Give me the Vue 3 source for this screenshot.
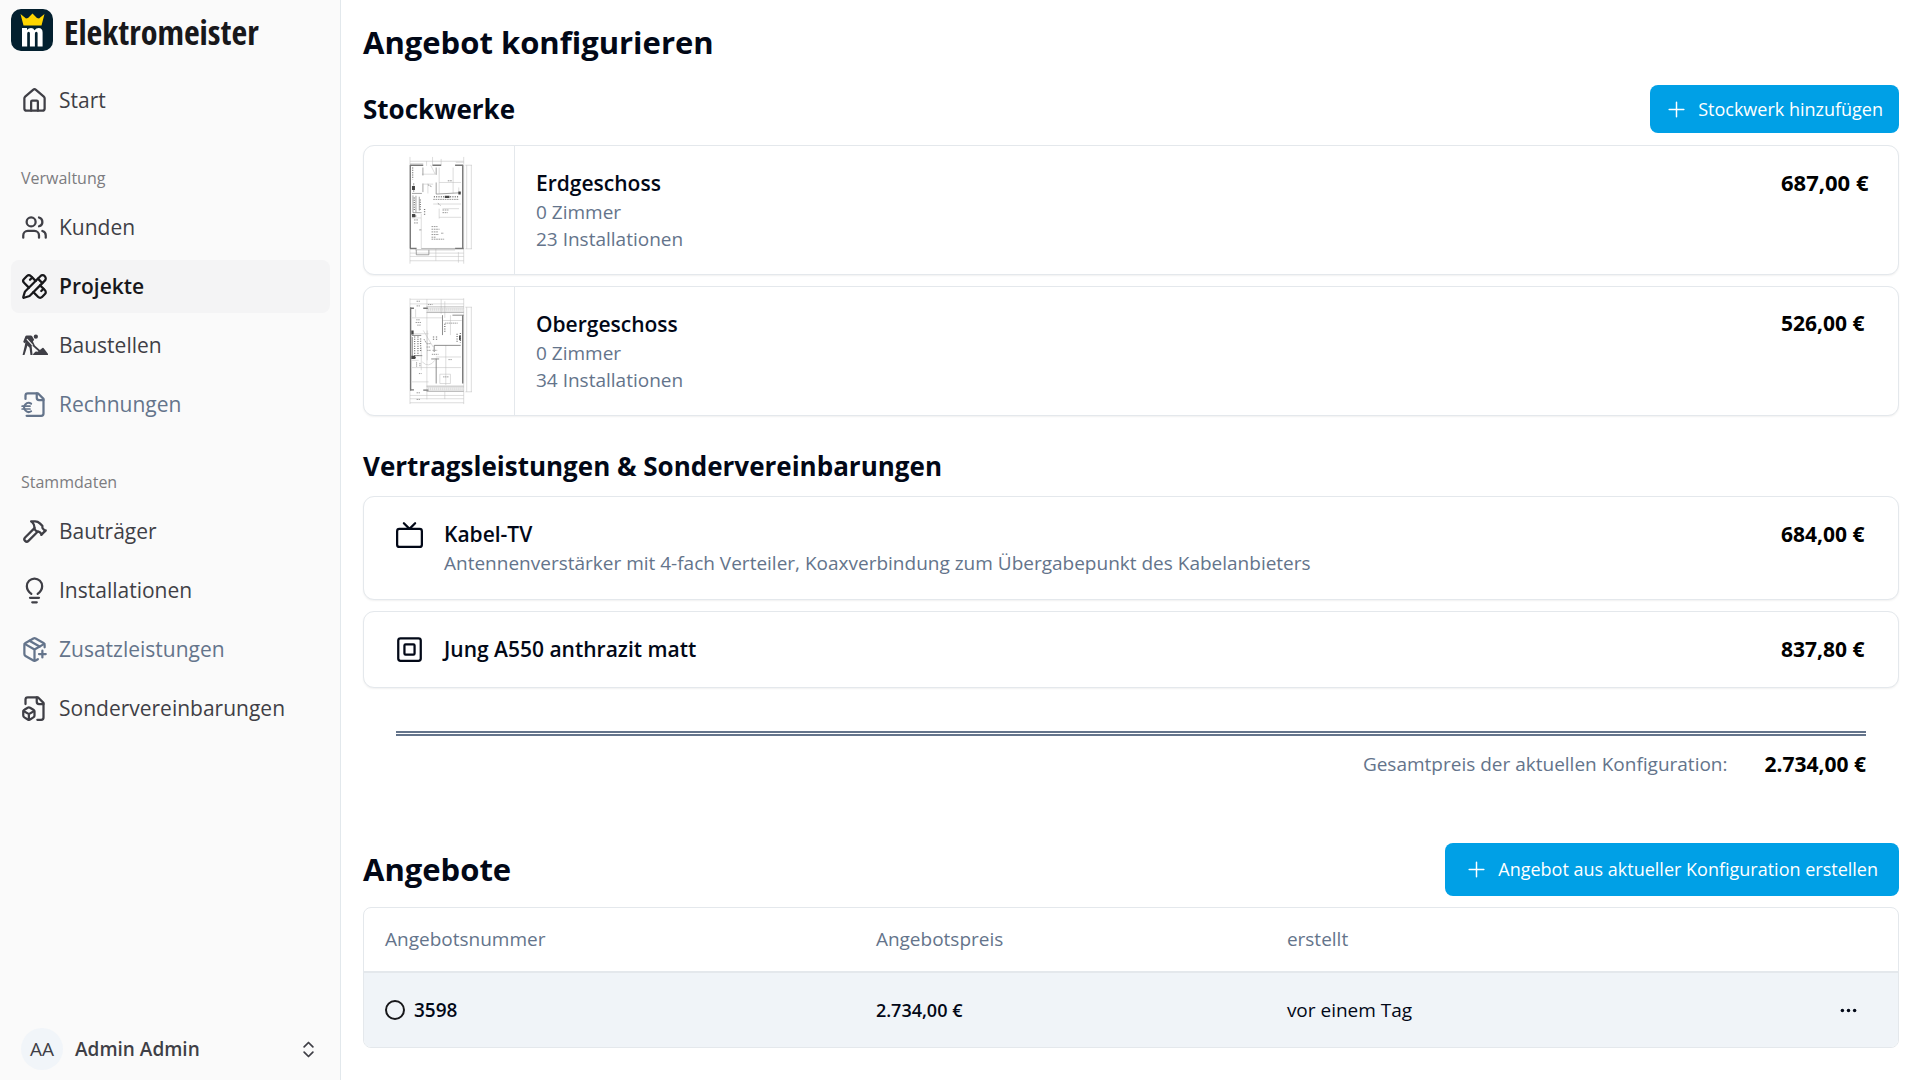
<script setup>
import { ref } from 'vue'

const icons = {
  home: '<path d="M15 21v-8a1 1 0 0 0-1-1h-4a1 1 0 0 0-1 1v8"/><path d="M3 10a2 2 0 0 1 .709-1.528l7-5.999a2 2 0 0 1 2.582 0l7 5.999A2 2 0 0 1 21 10v9a2 2 0 0 1-2 2H5a2 2 0 0 1-2-2z"/>',
  users: '<path d="M16 21v-2a4 4 0 0 0-4-4H6a4 4 0 0 0-4 4v2"/><circle cx="9" cy="7" r="4"/><path d="M22 21v-2a4 4 0 0 0-3-3.87"/><path d="M16 3.13a4 4 0 0 1 0 7.75"/>',
  tools: '<path d="M13 7 8.7 2.7a2.41 2.41 0 0 0-3.4 0L2.7 5.3a2.41 2.41 0 0 0 0 3.4L7 13"/><path d="m8 6 2-2"/><path d="m18 16 2-2"/><path d="m17 11 4.3 4.3c.94.94.94 2.46 0 3.4l-2.6 2.6c-.94.94-2.46.94-3.4 0L11 17"/><path d="M21.174 6.812a1 1 0 0 0-3.986-3.987L3.842 16.174a2 2 0 0 0-.5.83l-1.321 4.352a.5.5 0 0 0 .623.622l4.353-1.32a2 2 0 0 0 .83-.497z"/><path d="m15 5 4 4"/>',
  digger: '<g fill="currentColor" stroke="none"><circle cx="13.2" cy="4.2" r="1.9"/><path d="M2 8.600 3.900 3.800Q4.200 3 5.100 3h3.600q.7 0 1.100.6l1.900 3.300-1.100 1.600 1.700 3.400 4.500 4.100 2.200-1.700q.5-.4 1 0l1.200 1.500 2.700 3.600q.6 1-.5 1H11.200q-1.100 0-.4-.9l1.700-1.800q.4-.4.900-.3l1.400.2.700-.6-4.600-4.200-1.500-.8.900 8.400H8.400l-.8-6.300-1.900-2.100-1.100 3.800-1.500 4.600H1.400l2-8.500.5-2.900-1 .9z"/></g><path d="m5.500 6.500 4.700 5.200" stroke="#fafafa" stroke-width="1"/>',
  invoice: '<path d="M14 2v4a2 2 0 0 0 2 2h4"/><path d="M4 7V4a2 2 0 0 1 2-2h9l5 5v13a2 2 0 0 1-2 2H5"/><path d="M9 11.200A4 4 0 1 0 9 18" stroke-width="1.800"/><path d="M1 13.500h7M1 16h7" stroke-width="1.500"/>',
  hammer: '<path d="m15 12-8.373 8.373a1 1 0 1 1-3-3L12 9"/><path d="m18 15 4-4"/><path d="m21.500 11.500-1.914-1.914A2 2 0 0 1 19 8.172V7l-2.260-2.260a6 6 0 0 0-4.202-1.756L9 2.960l.920.820A6.180 6.180 0 0 1 12 8.400V10l2 2h1.172a2 2 0 0 1 1.414.586L18.500 14.500"/>',
  bulb: '<path d="M9.200 15C7.300 13.600 5.200 11.800 5.200 8.200a6.800 6.800 0 0 1 13.600 0c0 3.600-2.100 5.400-4 6.800"/><path d="M8 18.500h8M10 22.500h4"/>',
  box: '<path d="M16 16h6M19 13v6"/><path d="M21 10V8a2 2 0 0 0-1-1.730l-7-4a2 2 0 0 0-2 0l-7 4A2 2 0 0 0 3 8v8a2 2 0 0 0 1 1.730l7 4a2 2 0 0 0 2 0l2-1.140"/><path d="m7.500 4.270 9 5.150"/><path d="M3.290 7 12 12l8.710-5M12 22V12"/>',
  fileBox: '<path d="M14.500 22H18a2 2 0 0 0 2-2V7l-5-5H6a2 2 0 0 0-2 2v4"/><path d="M14 2v4a2 2 0 0 0 2 2h4"/><path d="M3 13.100a2 2 0 0 0-1 1.760v3.240a2 2 0 0 0 .970 1.780L6 21.700a2 2 0 0 0 2.030.010L11 19.900a2 2 0 0 0 1-1.760V14.900a2 2 0 0 0-.970-1.780L8 11.300a2 2 0 0 0-2.030-.010Z"/><path d="M7 17v5M11.700 14.200 7 17l-4.700-2.800"/>',
  tv: '<path d="m17 2-5 5-5-5"/><rect width="22" height="16" x="1" y="7" rx="2"/>',
  frame: '<rect width="20" height="20" x="2" y="2" rx="2"/><rect width="9" height="9" x="7.500" y="7.500" rx="1"/>'
}

const start = { label: 'Start', icon: 'home' }
const groups = [
  {
    title: 'Verwaltung',
    items: [
      { label: 'Kunden', icon: 'users' },
      { label: 'Projekte', icon: 'tools', active: true },
      { label: 'Baustellen', icon: 'digger' },
      { label: 'Rechnungen', icon: 'invoice', muted: true }
    ]
  },
  {
    title: 'Stammdaten',
    items: [
      { label: 'Bauträger', icon: 'hammer' },
      { label: 'Installationen', icon: 'bulb' },
      { label: 'Zusatzleistungen', icon: 'box', muted: true },
      { label: 'Sondervereinbarungen', icon: 'fileBox' }
    ]
  }
]

const planGround = `
<g stroke="#bbb" stroke-width="1.500">
<path d="M178 468v322M340 468v322M178 481h162M178 488h40M228 481v14M246 468v26M272 474v20M316 484h24M178 758h162M178 768h162M178 781h162M256 745v36M324 755v32M349 493v252M363 493v252M345 493h20M345 745h20M325 560v20M212 640v104M183 652h28M266 500v78M308 500v78M266 545h66M214 520h40l-14-28M218 550h30M266 650h66M266 624v30M276 624h50M248 610h84M232 548v30"/>
</g>
<g stroke="#777" stroke-width="4"><path d="M179 492v252M337 492v252M178 493h40M246 493h26M314 493h24M178 744h20M314 744h26"/></g>
<g stroke="#777" stroke-width="2"><path d="M217 500v24M217 548v26M257 500v22M257 545v35M257 580l74-4M197 748v15h38v-15M184 578h30M187 584v52h26M196 585v50M206 588v42"/></g>
<g stroke="#777" stroke-width="4" stroke-dasharray="3 4"><path d="M186 500v36M189 548v26M191 590v42M209 596v34M187 646h12M250 588h76M222 625v20"/></g>
<g stroke="#999" stroke-width="3" stroke-dasharray="5 2"><path d="M248 596h78M276 628h18M276 636h16M243 678h18M243 686h24M243 694h20M243 702h22M243 710h12M272 698h8M243 716h38M190 658h14M190 667h12M232 552l12 6M262 608l8 6M292 540h14M206 688h8"/></g>
<path d="M194 748h120M212 744h102" stroke="#999" stroke-width="2"/>
<path d="M184 556h9v12h-9zM184 640h10v10h-10zM324 572h7v9h-7zM283 585h14v7h-14z" fill="#444" stroke="none"/>`

const planUpper = `
<g stroke="#bbb" stroke-width="1.500">
<path d="M178 53v319M340 53v319M178 56h162M178 70h162M229 56v302M272 56v44M283 62v50M178 346h162M178 356h162M178 368h162M283 335v22M349 80v255M363 80v255M345 80h20M345 335h20M229 85h112M229 92h112M229 323h112M229 330h112M184 112h90M184 160h50M278 120h56M300 104v60M184 240h20M184 262h148M184 305h50M218 150l30 50M215 245q20 20 38-5M230 150v90M256 230h76M286 195v120M195 86v24M212 200v70M268 310v-28h32v28z"/>
</g>
<g stroke="#777" stroke-width="4"><path d="M180 80v252M337 104v206M178 83h12M218 83h14M178 329h12M218 330h16"/></g>
<g stroke="#777" stroke-width="2.500"><path d="M276 104v60M251 195h80M251 195v20M257 235v75M184 165h28M185 170v60M190 226h25M306 104h34M242 236h24"/></g>
<g stroke="#999" stroke-width="2"><path d="M228 79h112M228 96h112M228 318h112M228 334h112"/></g>
<g stroke="#ccc" stroke-width="8" stroke-dasharray="2 4"><path d="M232 87h106M232 326h106"/></g>
<g stroke="#777" stroke-width="4" stroke-dasharray="3 4"><path d="M192 168v58M202 168v58M210 174v40M249 168v10M258 168v10M330 158v30M320 160v26M283 130v26M186 232h10"/></g>
<g stroke="#999" stroke-width="3" stroke-dasharray="4 2"><path d="M197 118h12M195 126h16M200 134h10M230 190h10M228 200h12M230 210h12M284 128h38M294 238h10M205 280h8M198 62h12M198 76h12M198 338h12M198 358h12M220 176l10 16M198 246v14M208 248v12M246 210h14M244 222h20M278 290h16M232 72h14"/></g>
<path d="M182 150h7v12h-7zM182 226h12v10h-12zM326 165h5v14h-5z" fill="#444" stroke="none"/>`

const floors = [
  { name: 'Erdgeschoss', rooms: '0 Zimmer', items: '23 Installationen', price: '687,00 €', plan: planGround, box: '166 466 202 324', large: true },
  { name: 'Obergeschoss', rooms: '0 Zimmer', items: '34 Installationen', price: '526,00 €', plan: planUpper, box: '166 50 202 324' }
]

const services = [
  { name: 'Kabel-TV', note: 'Antennenverstärker mit 4-fach Verteiler, Koaxverbindung zum Übergabepunkt des Kabelanbieters', price: '684,00 €', icon: 'tv' },
  { name: 'Jung A550 anthrazit matt', price: '837,80 €', icon: 'frame' }
]

const offers = [{ number: '3598', price: '2.734,00 €', created: 'vor einem Tag' }]
const selected = ref('')
</script>

<template>
  <div class="layout">
    <aside class="sidebar">
      <a class="brand" href="#">
        <svg class="logo" viewBox="0 0 42 42" aria-hidden="true">
          <rect width="42" height="42" rx="10" fill="#03202f" />
          <path d="M9.500 5l5.500 4.500 2-.5 4.500-4.500L26 9l2 .5L33.500 5 30.500 16.500h-18z" fill="#ffd500" />
          <path d="M11 19h5v2q1.500-2 4-2 2.600 0 3.500 2.200Q25.200 19 27.600 19q4 0 4 4.500V37.500h-5V24.200q0-1.500-1.200-1.500-1.500 0-1.500 1.700V37.500h-5V24.200q0-1.500-1.200-1.500-1.500 0-1.500 1.700V37.500H11z" fill="#fff" />
        </svg>
        <span>Elektromeister</span>
      </a>
      <nav>
        <div class="group">
          <a class="item" href="#"><svg class="icon" viewBox="0 0 24 24" v-html="icons[start.icon]" />{{ start.label }}</a>
        </div>
        <div v-for="g in groups" :key="g.title" class="group">
          <div class="group-title">{{ g.title }}</div>
          <a v-for="i in g.items" :key="i.label" class="item" :class="{ active: i.active, muted: i.muted }" href="#">
            <svg class="icon" viewBox="0 0 24 24" v-html="icons[i.icon]" />{{ i.label }}
          </a>
        </div>
      </nav>
      <button class="account" type="button">
        <span class="avatar">AA</span>
        <span class="account-name">Admin Admin</span>
        <svg class="chevrons" viewBox="0 0 24 24"><path d="m7 15 5 5 5-5M7 9l5-5 5 5" /></svg>
      </button>
    </aside>

    <main>
      <h1>Angebot konfigurieren</h1>

      <section>
        <div class="bar">
          <h2>Stockwerke</h2>
          <button class="primary small" type="button">
            <svg class="plus" viewBox="0 0 20 20"><path d="M3 10h14M10 3v14" /></svg>Stockwerk hinzufügen
          </button>
        </div>
        <div class="stack">
          <article v-for="f in floors" :key="f.name" class="card floor">
            <div class="thumb"><svg :viewBox="f.box" v-html="f.plan" /></div>
            <div class="info">
              <h3>{{ f.name }}</h3>
              <p>{{ f.rooms }}</p>
              <p>{{ f.items }}</p>
            </div>
            <div class="price" :class="{ large: f.large }">{{ f.price }}</div>
          </article>
        </div>
      </section>

      <section class="services">
        <h2>Vertragsleistungen &amp; Sondervereinbarungen</h2>
        <div class="stack">
          <article v-for="s in services" :key="s.name" class="card service">
            <svg class="icon" viewBox="0 0 24 24" v-html="icons[s.icon]" />
            <div class="info">
              <h3>{{ s.name }}</h3>
              <p v-if="s.note">{{ s.note }}</p>
            </div>
            <div class="price">{{ s.price }}</div>
          </article>
        </div>
        <div class="total">
          <span>Gesamtpreis der aktuellen Konfiguration:</span>
          <strong>2.734,00 €</strong>
        </div>
      </section>

      <section class="offers">
        <div class="bar">
          <h1>Angebote</h1>
          <button class="primary" type="button">
            <svg class="plus" viewBox="0 0 20 20"><path d="M3 10h14M10 3v14" /></svg>Angebot aus aktueller Konfiguration erstellen
          </button>
        </div>
        <div class="table-frame">
          <table>
            <thead>
              <tr>
                <th class="col-number" scope="col">Angebotsnummer</th>
                <th class="col-price" scope="col">Angebotspreis</th>
                <th scope="col">erstellt</th>
                <th class="col-menu"></th>
              </tr>
            </thead>
            <tbody>
              <tr v-for="o in offers" :key="o.number">
                <td>
                  <label class="choice"><input v-model="selected" type="radio" name="offer" :value="o.number" />{{ o.number }}</label>
                </td>
                <td class="strong">{{ o.price }}</td>
                <td>{{ o.created }}</td>
                <td>
                  <button class="menu" type="button" aria-label="Menü">
                    <svg viewBox="0 0 24 24"><circle cx="5" cy="12" r="2" /><circle cx="12" cy="12" r="2" /><circle cx="19" cy="12" r="2" /></svg>
                  </button>
                </td>
              </tr>
            </tbody>
          </table>
        </div>
      </section>
    </main>
  </div>
</template>

<style>
body {
  margin: 0;
  background: #fff;
}
</style>

<style scoped>
* {
  box-sizing: border-box;
}
.layout {
  display: flex;
  min-height: 100vh;
  font-family: 'Open Sans', 'Noto Sans', sans-serif;
  font-size: 19px;
  line-height: 27px;
  color: #020817;
}
h1, h2, h3, p {
  margin: 0;
}
button {
  font: inherit;
  border: 0;
  cursor: pointer;
}
svg {
  flex: none;
  fill: none;
  stroke: currentColor;
  stroke-width: 2;
  stroke-linecap: round;
  stroke-linejoin: round;
}
.sidebar {
  display: flex;
  flex-direction: column;
  flex: none;
  width: 341px;
  background: #fafafa;
  border-right: 1px solid #e2e8ec;
  color: #3f3f46;
}
.brand {
  display: flex;
  align-items: flex-start;
  gap: 11px;
  padding: 9px 11px 0;
  font-family: 'Liberation Sans Narrow', 'Open Sans Condensed', 'DejaVu Sans Condensed', sans-serif;
  font-size: 34px;
  font-weight: 700;
  line-height: 46px;
  color: #18181b;
  text-decoration: none;
}
.logo {
  width: 42px;
  height: 42px;
  stroke: none;
}
nav {
  flex: 1;
  padding-top: 8px;
}
.group {
  display: flex;
  flex-direction: column;
  gap: 6px;
  padding: 11px 10px 9px 11px;
}
.group + .group {
  margin-top: 10px;
}
.group-title {
  height: 38px;
  padding: 0 10px;
  font-size: 16px;
  font-weight: 500;
  line-height: 42px;
  color: #7c7c80;
}
.item {
  display: flex;
  align-items: center;
  gap: 11px;
  height: 53px;
  padding: 0 10px;
  border-radius: 8px;
  font-size: 21px;
  color: inherit;
  text-decoration: none;
}
.item.active {
  background: #f4f4f5;
  color: #18181b;
  font-weight: 600;
}
.item.muted {
  color: #64748b;
}
.icon {
  width: 27px;
  height: 27px;
}
.account {
  display: flex;
  align-items: center;
  gap: 12px;
  margin: 0 10px 10px 11px;
  padding: 0 11px 0 10px;
  background: none;
  color: inherit;
  text-align: left;
}
.avatar {
  width: 42px;
  border-radius: 50%;
  background: #f1f5f9;
  line-height: 42px;
  text-align: center;
}
.account-name {
  flex: 1;
  font-weight: 600;
}
.chevrons {
  width: 21px;
  height: 21px;
}
main {
  flex: 1;
  min-width: 0;
  padding: 21px 21px 32px 22px;
}
h1 {
  font-size: 31px;
  font-weight: 700;
  line-height: 43px;
}
h2 {
  font-size: 26px;
  font-weight: 700;
  line-height: 37px;
}
h3 {
  font-size: 21px;
  font-weight: 600;
  line-height: 32px;
}
.bar {
  display: flex;
  align-items: center;
  justify-content: space-between;
  margin: 21px 0 12px;
}
.primary {
  display: flex;
  align-items: center;
  gap: 11px;
  height: 53px;
  padding: 0 21px;
  border-radius: 8px;
  background: #00a0e6;
  color: #fff;
  font-size: 18px;
  font-weight: 500;
}
.primary.small {
  height: 48px;
  padding: 0 16px;
}
.plus {
  width: 21px;
  height: 21px;
  stroke-width: 1.4;
}
.stack {
  display: flex;
  flex-direction: column;
  gap: 11px;
}
.card {
  display: flex;
  border: 1px solid #e4e8ec;
  border-radius: 11px;
  background: #fff;
  box-shadow: 0 1px 2px rgba(0, 0, 0, 0.06);
}
.info {
  flex: 1;
}
.info p {
  color: #64748b;
}
.price {
  width: 85px;
  margin-right: 32px;
  font-size: 21px;
  font-weight: 700;
  line-height: 32px;
  color: #000;
  white-space: nowrap;
}
.price.large {
  font-size: 22px;
}
.floor {
  height: 130px;
}
.floor .thumb {
  display: flex;
  align-items: center;
  justify-content: center;
  width: 151px;
  border-right: 1px solid #e4e8ec;
}
.thumb svg {
  width: 67px;
  height: 108px;
  stroke-linecap: butt;
}
.floor .info {
  padding: 21px 21px 0;
}
.floor .price {
  margin-top: 20px;
}
.services {
  margin-top: 32px;
}
.services .stack {
  margin-top: 11px;
}
.service {
  gap: 21px;
  padding: 21px 0 22px 32px;
}
.service .icon {
  margin-top: 3px;
}
.total {
  display: flex;
  justify-content: flex-end;
  gap: 37px;
  margin: 43px 33px 0;
  padding-top: 11px;
  border-top: 5px double #64748b;
  line-height: 34px;
  color: #64748b;
}
.total strong {
  font-size: 21px;
  color: #000;
}
.offers {
  margin-top: 62px;
}
.offers .bar {
  margin: 0 0 11px;
}
.table-frame {
  overflow: hidden;
  border: 1px solid #e4e8ec;
  border-radius: 8px;
}
table {
  width: 100%;
  border-collapse: collapse;
  text-align: left;
}
th {
  height: 64px;
  padding: 0 21px;
  border-bottom: 2px solid #e4e8ec;
  font-weight: 500;
  color: #64748b;
}
td {
  height: 75px;
  padding: 0 21px;
  background: #f0f4f8;
}
.col-number {
  width: 32%;
}
.col-price {
  width: 411px;
}
.col-menu {
  width: 96px;
}
.choice {
  display: flex;
  align-items: center;
  gap: 9px;
  font-weight: 600;
}
.choice input {
  appearance: none;
  width: 20px;
  height: 20px;
  margin: 0;
  border: 2px solid #18181b;
  border-radius: 50%;
}
.choice input:checked {
  background: #18181b;
}
.strong {
  font-size: 18px;
  font-weight: 600;
}
.menu {
  display: flex;
  margin-left: auto;
  padding: 16px 18px;
  background: none;
  color: inherit;
}
.menu svg {
  width: 21px;
  height: 21px;
  fill: currentColor;
  stroke: none;
}
</style>
